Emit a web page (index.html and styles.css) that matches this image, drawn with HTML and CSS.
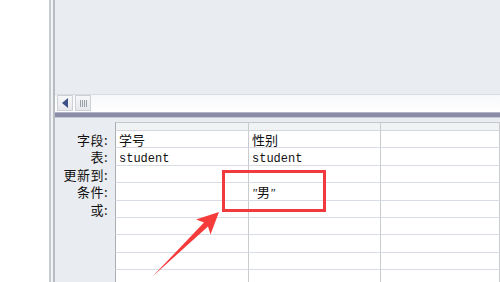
FILE: index.html
```html
<!DOCTYPE html>
<html>
<head>
<meta charset="utf-8">
<link rel="stylesheet" href="styles.css">
</head>
<body>
<div class="app">
  <div class="gap"></div>
  <div class="edge"></div>
  <div class="main">
    <div class="upper"></div>
    <div class="scrollbar">
      <div class="sb-btn"><span class="tri"></span></div>
      <div class="sb-thumb"><span class="grip"></span></div>
    </div>
    <div class="splitter"></div>
    <div class="lower">
      <div class="qgrid">
        <div class="lbl"></div><div class="cell head first"></div><div class="cell head"></div><div class="cell head"></div>
        <div class="lbl">字段:</div><div class="cell first">学号</div><div class="cell">性别</div><div class="cell"></div>
        <div class="lbl">表:</div><div class="cell first"><span class="lat">student</span></div><div class="cell"><span class="lat">student</span></div><div class="cell"></div>
        <div class="lbl">更新到:</div><div class="cell first"></div><div class="cell"></div><div class="cell"></div>
        <div class="lbl">条件:</div><div class="cell first"></div><div class="cell"><span class="q">"</span>男<span class="q">"</span></div><div class="cell"></div>
        <div class="lbl">或:</div><div class="cell first"></div><div class="cell"></div><div class="cell"></div>
        <div class="lbl"></div><div class="cell first"></div><div class="cell"></div><div class="cell"></div>
        <div class="lbl"></div><div class="cell first"></div><div class="cell"></div><div class="cell"></div>
        <div class="lbl"></div><div class="cell first"></div><div class="cell"></div><div class="cell"></div>
        <div class="lbl"></div><div class="cell first"></div><div class="cell"></div><div class="cell"></div>
      </div>
    </div>
  </div>
</div>
<div class="highlight"></div>
<svg class="arrow" width="500" height="282" viewBox="0 0 500 282">
  <polygon points="219,212 196,219.5 204,222.5 152.5,276.5 208,226.5 210.5,234.5" fill="#f63b3b"/>
</svg>
</body>
</html>
```
FILE: styles.css
```css
html, body {
  margin: 0;
  padding: 0;
  width: 500px;
  height: 282px;
  overflow: hidden;
  background: #ffffff;
  font-family: "Noto Sans CJK SC", "Liberation Mono", sans-serif;
}
.app {
  display: flex;
  height: 282px;
}
.gap {
  width: 49px;
  background: #ffffff;
}
.edge {
  width: 6px;
  background: linear-gradient(to right, #c6c9ce 0 2px, #f1f2f4 2px 4px, #b9bcc2 4px 6px);
}
.main {
  flex: 1;
  display: flex;
  flex-direction: column;
  min-width: 0;
}
.upper {
  height: 94px;
  background: #e9ecf0;
}
.scrollbar {
  height: 18px;
  box-sizing: border-box;
  border-top: 1px solid #d9dce0;
  background: linear-gradient(to bottom, #f7f8f9, #ffffff);
  display: flex;
  align-items: stretch;
  padding: 0 0 1px 2px;
  gap: 2px;
}
.sb-btn, .sb-thumb {
  width: 16px;
  box-sizing: border-box;
  border: 1px solid #cdd0d5;
  background: linear-gradient(to bottom, #f6f7f8, #e6e8eb);
  display: flex;
  align-items: center;
  justify-content: center;
}
.tri {
  width: 0;
  height: 0;
  border-top: 5px solid transparent;
  border-bottom: 5px solid transparent;
  border-right: 6px solid #3f5288;
}
.grip {
  width: 7px;
  height: 7px;
  background: repeating-linear-gradient(to right, #9a9ea6 0 1px, transparent 1px 2px);
}
.splitter {
  height: 6px;
  background: linear-gradient(to bottom, #b4b6c8 0 1px, #8a8ca8 1px 5px, #c6c8d4 5px 6px);
}
.lower {
  flex: 1;
  background: #e9ecf0;
  padding-top: 4px;
  overflow: hidden;
}
.qgrid {
  display: grid;
  grid-template-columns: 60px 134px 132px 1fr;
  grid-template-rows: 9px 17px 18px 17px 18px 17px 17px 18px 17px 17px;
  font-size: 13px;
  color: #111;
}
.lbl {
  text-align: right;
  padding-right: 7px;
  line-height: 17px;
  white-space: nowrap;
  letter-spacing: 0.5px;
}
.cell {
  box-sizing: border-box;
  background: #ffffff;
  border-right: 1px solid #c9cbce;
  border-bottom: 1px solid #d7dce6;
  padding-left: 3px;
  line-height: 17px;
  white-space: nowrap;
}
.cell.first {
  border-left: 1px solid #a9acb1;
}
.cell.head {
  background: #f1f2f3;
  border-top: 1px solid #c4c7cc;
  border-bottom: 1px solid #d4d7dc;
}
.lat {
  font-family: "Liberation Mono", monospace;
  font-size: 12px;
}
.q {
  font-family: "Liberation Serif", serif;
  font-style: italic;
  font-size: 12px;
}
.highlight {
  position: absolute;
  left: 222px;
  top: 170px;
  width: 104px;
  height: 42px;
  box-sizing: border-box;
  border: 3px solid #f03a3e;
}
.arrow {
  position: absolute;
  left: 0;
  top: 0;
}
```
